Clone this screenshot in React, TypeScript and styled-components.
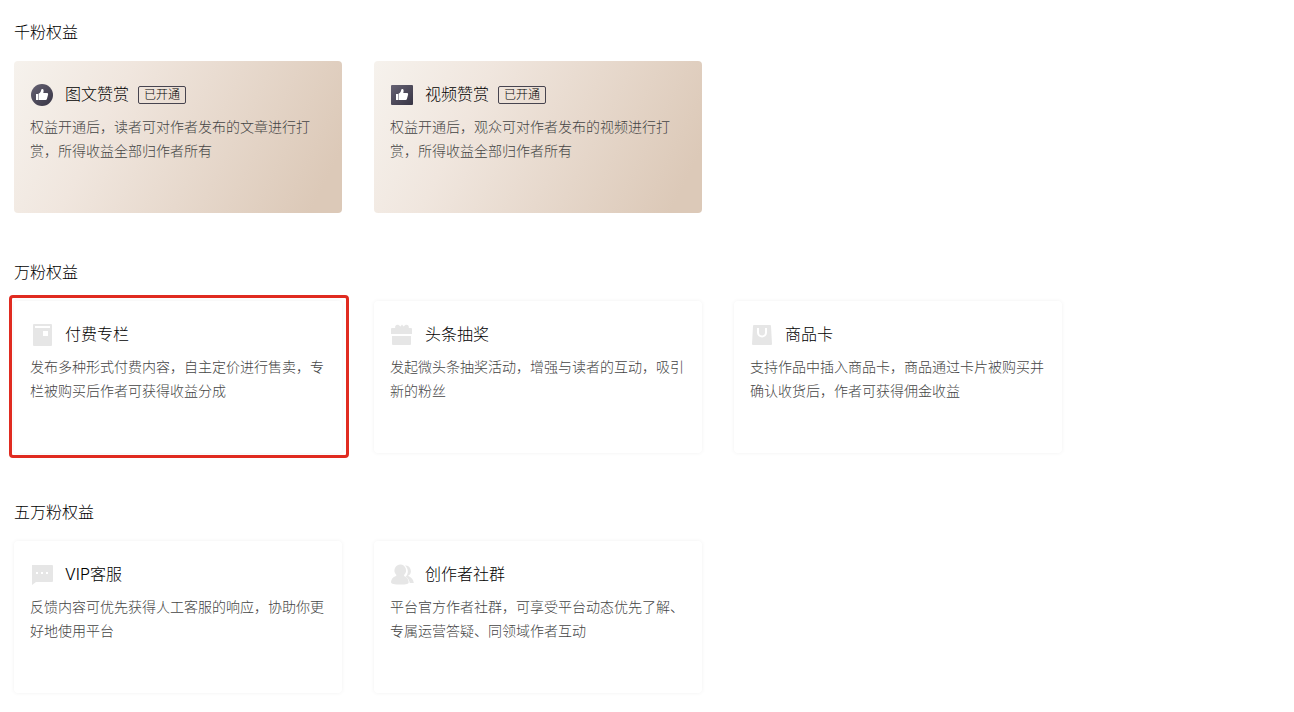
import React from "react";
import styled, { createGlobalStyle } from "styled-components";

const GlobalStyle = createGlobalStyle`
  *, *::before, *::after { box-sizing: border-box; }
  body {
    margin: 0;
    background: #fff;
    color: #000;
    font-family: Inter, "Noto Sans CJK SC", sans-serif;
    font-weight: 300;
  }
`;

const Page = styled.main`
  padding: 20px 14px 0;
`;

const Section = styled.section`
  margin-bottom: 47px;
`;

const SectionTitle = styled.h2`
  margin: 0 0 17px;
  font-size: 16px;
  line-height: 24px;
  font-weight: 300;
`;

const CardGrid = styled.ul`
  display: grid;
  grid-template-columns: repeat(auto-fill, 328px);
  gap: 32px;
  margin: 0;
  padding: 0;
  list-style: none;
`;

const Card = styled.li<{ $active?: boolean; $marked?: boolean }>`
  position: relative;
  min-height: 152px;
  padding: 21px 16px;
  border-radius: 4px;
  background: ${(p) =>
    p.$active ? "linear-gradient(117deg, #f6f2ed 0%, #f0e6de 30%, #dcc9b8 92%)" : "#fff"};
  box-shadow: ${(p) => (p.$active ? "none" : "0 0 4px rgba(0, 0, 0, 0.06)")};

  &::after {
    content: "";
    display: ${(p) => (p.$marked ? "block" : "none")};
    position: absolute;
    inset: -6px -7px -5px -5px;
    border: 3px solid #e02b20;
    border-radius: 4px;
    pointer-events: none;
  }
`;

const CardHeader = styled.header`
  display: flex;
  align-items: center;
  height: 26px;
  margin-bottom: 7px;
`;

const Icon = styled.svg`
  flex: none;
  width: 24px;
  height: 24px;
  margin-right: 11px;
`;

const CardTitle = styled.h3`
  align-self: flex-start;
  margin: 0;
  font-size: 16px;
  line-height: 24px;
  font-weight: 300;
`;

const Badge = styled.span`
  margin-left: 9px;
  padding: 0 5px;
  border: 1px solid #47444f;
  border-radius: 2px;
  font-size: 12px;
  line-height: 16px;
`;

const Description = styled.p`
  margin: 0;
  color: #444;
  font-size: 14px;
  line-height: 24px;
`;

type IconName = "article" | "video" | "column" | "gift" | "bag" | "chat" | "group";

const thumb = (
  <>
    <rect x="6" y="11" width="2" height="6" fill="#fff" />
    <path
      d="M8.500 10.800C10.500 9.800 11 8.500 11.300 6.600c.2-1 2.200-.8 2.300.8.100 1-.1 1.800-.4 2.600h3.600c1 0 1.500.7 1.300 1.500l-1.200 4.500c-.2.700-.7 1-1.300 1H8.500z"
      fill="#fff"
    />
  </>
);

const glyphs: Record<IconName, React.ReactNode> = {
  article: (
    <>
      <circle cx="12" cy="12" r="11" fill="url(#ink)" />
      {thumb}
    </>
  ),
  video: (
    <>
      <rect x="1" y="2" width="22" height="20" rx="1" fill="url(#ink)" />
      {thumb}
    </>
  ),
  column: (
    <>
      <path d="M4 1h17a1 1 0 0 1 1 1v20a1 1 0 0 1-1 1H4a1 1 0 0 1-1-1V2a1 1 0 0 1 1-1z" fill="#e6e6e6" />
      <path d="M5 3h15v2H5zM13 8h5v5h-5z" fill="#fff" />
    </>
  ),
  gift: (
    <path
      d="M2 5h3.200C4.500 2.500 7 .8 9 2.200l1.500 1.300L12 1.500l1.500 2L15 2.200C17 .8 19.500 2.500 18.800 5H21a1 1 0 0 1 1 1v5H1V6a1 1 0 0 1 1-1zM2 13h19v8a1 1 0 0 1-1 1H3a1 1 0 0 1-1-1z"
      fill="#e6e6e6"
    />
  ),
  bag: (
    <>
      <path d="M4 2h16a1 1 0 0 1 1 1l1 18a1 1 0 0 1-1 1H3a1 1 0 0 1-1-1L3 3a1 1 0 0 1 1-1z" fill="#e6e6e6" />
      <path d="M8 5v4.500a4 4 0 0 0 8 0V5" fill="none" stroke="#fff" strokeWidth="2" />
    </>
  ),
  chat: (
    <>
      <path d="M2 2h20a1 1 0 0 1 1 1v15a1 1 0 0 1-1 1H6l-4 3V2z" fill="#e6e6e6" />
      <path d="M6 9h2v2H6zM11 9h2v2h-2zM16 9h2v2h-2z" fill="#fff" />
    </>
  ),
  group: (
    <>
      <path
        d="M15 2.500a5.500 5.500 0 0 1 3 10.300c3 1.200 5.500 3.700 5.800 7.200h-4c-.5-3-2-5-4-6.300 2.700-3 3-8-.8-11.200z"
        fill="#e6e6e6"
      />
      <path
        d="M10.500 1.500a6 6 0 0 1 4 10c-.8.800-.5 1.700.5 2 2 .8 3.500 3 3.700 5.500 0 2-2 2.500-8.200 2.500S1 21 1 19c.2-2.500 1.800-4.700 4-5.500 1.500-.5 1.800-1.200 1-2a6 6 0 0 1 4.500-10z"
        fill="#e6e6e6"
      />
    </>
  ),
};

interface Benefit {
  icon: IconName;
  title: string;
  text: string;
  active?: boolean;
  marked?: boolean;
}

const sections: { title: string; items: Benefit[] }[] = [
  {
    title: "千粉权益",
    items: [
      { icon: "article", title: "图文赞赏", text: "权益开通后，读者可对作者发布的文章进行打赏，所得收益全部归作者所有", active: true },
      { icon: "video", title: "视频赞赏", text: "权益开通后，观众可对作者发布的视频进行打赏，所得收益全部归作者所有", active: true },
    ],
  },
  {
    title: "万粉权益",
    items: [
      { icon: "column", title: "付费专栏", text: "发布多种形式付费内容，自主定价进行售卖，专栏被购买后作者可获得收益分成", marked: true },
      { icon: "gift", title: "头条抽奖", text: "发起微头条抽奖活动，增强与读者的互动，吸引新的粉丝" },
      { icon: "bag", title: "商品卡", text: "支持作品中插入商品卡，商品通过卡片被购买并确认收货后，作者可获得佣金收益" },
    ],
  },
  {
    title: "五万粉权益",
    items: [
      { icon: "chat", title: "VIP客服", text: "反馈内容可优先获得人工客服的响应，协助你更好地使用平台" },
      { icon: "group", title: "创作者社群", text: "平台官方作者社群，可享受平台动态优先了解、专属运营答疑、同领域作者互动" },
    ],
  },
];

function BenefitIcon({ name }: { name: IconName }) {
  return (
    <Icon viewBox="0 0 24 24" aria-hidden="true">
      <defs>
        <linearGradient id="ink" x1="0" y1="0" x2="1" y2="1">
          <stop offset="0" stopColor="#666273" />
          <stop offset="1" stopColor="#373444" />
        </linearGradient>
      </defs>
      {glyphs[name]}
    </Icon>
  );
}

export default function App() {
  return (
    <>
      <GlobalStyle />
      <Page lang="zh-CN">
        {sections.map((section) => (
          <Section key={section.title}>
            <SectionTitle>{section.title}</SectionTitle>
            <CardGrid>
              {section.items.map((item) => (
                <Card key={item.title} $active={item.active} $marked={item.marked}>
                  <CardHeader>
                    <BenefitIcon name={item.icon} />
                    <CardTitle>{item.title}</CardTitle>
                    {item.active && <Badge>已开通</Badge>}
                  </CardHeader>
                  <Description>{item.text}</Description>
                </Card>
              ))}
            </CardGrid>
          </Section>
        ))}
      </Page>
    </>
  );
}
